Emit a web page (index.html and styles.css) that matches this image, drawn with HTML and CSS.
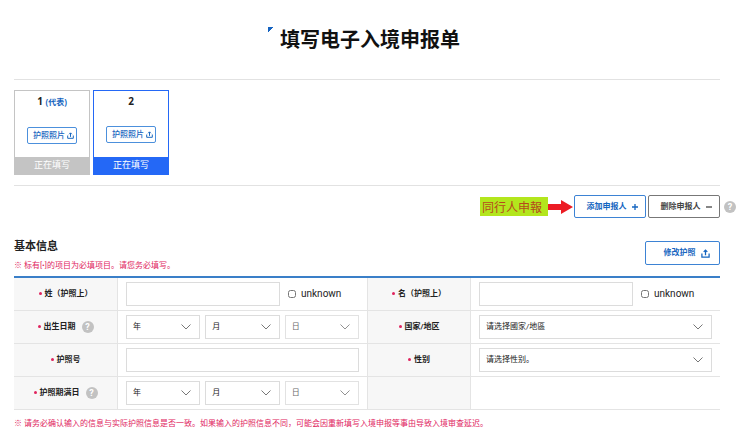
FILE: index.html
```
<!DOCTYPE html>
<html lang="zh-CN">

<head>
  <meta charset="UTF-8">
  <meta name="viewport" content="width=device-width, initial-scale=1.0">
  <title>填写电子入境申报单</title>
  <link rel="stylesheet" href="styles.css">
</head>

<body>
  <svg class="sprite" aria-hidden="true">
    <symbol id="upload" viewBox="0 0 10 10">
      <path d="M1 5v4h8V5M5 7V1.500M3 3.200l2-2 2 2" fill="none" stroke="currentColor" stroke-width="1.400" />
    </symbol>
  </svg>

  <main id="main">
    <h1 class="title">填写电子入境申报单</h1>

    <ul class="cards">
      <li class="card">
        <strong class="card-no">1 <span>(代表)</span></strong>
        <button type="button" class="photo-btn">护照照片 <svg><use href="#upload" /></svg></button>
        <span class="card-state">正在填写</span>
      </li>
      <li class="card active">
        <strong class="card-no">2</strong>
        <button type="button" class="photo-btn">护照照片 <svg><use href="#upload" /></svg></button>
        <span class="card-state">正在填写</span>
      </li>
    </ul>

    <div class="actions">
      <span class="tip">同行人申報</span>
      <svg class="arrow" viewBox="0 0 26 14">
        <path d="M0 4h13V0l12 7-12 7v-4H0z" fill="#ec1c24" />
      </svg>
      <button type="button" class="btn">添加申报人
        <svg class="sign" viewBox="0 0 6 6"><path d="M0 3h6M3 0v6" stroke="currentColor" stroke-width="1.300" /></svg>
      </button>
      <button type="button" class="btn gray">删除申报人
        <svg class="sign" viewBox="0 0 6 6"><path d="M0 3h6" stroke="currentColor" stroke-width="1.300" /></svg>
      </button>
      <button type="button" class="help">?</button>
    </div>

    <form>
      <div class="form-head">
        <div>
          <h2>基本信息</h2>
          <p class="note">※ 标有[•]的项目为必填项目。请您务必填写。</p>
        </div>
        <button type="button" class="btn edit">修改护照 <svg class="up"><use href="#upload" /></svg></button>
      </div>

      <table class="info">
        <tr>
          <th scope="row"><label class="need" for="surname">姓（护照上）</label></th>
          <td>
            <div class="fields">
              <input type="text" id="surname" class="input name">
              <label class="check"><input type="checkbox">unknown</label>
            </div>
          </td>
          <th scope="row"><label class="need" for="given">名（护照上）</label></th>
          <td>
            <div class="fields">
              <input type="text" id="given" class="input name">
              <label class="check"><input type="checkbox">unknown</label>
            </div>
          </td>
        </tr>
        <tr>
          <th scope="row"><label class="need" for="birth">出生日期</label><button type="button" class="help">?</button></th>
          <td>
            <div class="fields">
              <select id="birth" class="input"><option>年</option></select>
              <select class="input" aria-label="出生月"><option>月</option></select>
              <select class="input" aria-label="出生日" disabled><option>日</option></select>
            </div>
          </td>
          <th scope="row"><label class="need" for="nation">国家/地区</label></th>
          <td>
            <div class="fields">
              <select id="nation" class="input"><option>请选择國家/地區</option></select>
            </div>
          </td>
        </tr>
        <tr>
          <th scope="row"><label class="need" for="passport">护照号</label></th>
          <td>
            <div class="fields">
              <input type="text" id="passport" class="input">
            </div>
          </td>
          <th scope="row"><label class="need" for="gender">性别</label></th>
          <td>
            <div class="fields">
              <select id="gender" class="input"><option>请选择性别。</option></select>
            </div>
          </td>
        </tr>
        <tr>
          <th scope="row"><label class="need" for="expiry">护照期满日</label><button type="button" class="help">?</button></th>
          <td>
            <div class="fields">
              <select id="expiry" class="input"><option>年</option></select>
              <select class="input" aria-label="期满月"><option>月</option></select>
              <select class="input" aria-label="期满日" disabled><option>日</option></select>
            </div>
          </td>
          <th></th>
          <td></td>
        </tr>
      </table>
      <p class="note">※ 请务必确认输入的信息与实际护照信息是否一致。如果输入的护照信息不同，可能会因重新填写入境申报等事由导致入境审查延迟。</p>
    </form>
  </main>
</body>

</html>
```
FILE: styles.css
```
* {
  box-sizing: border-box;
}

body {
  margin: 0;
  background: #fff;
  color: #222;
  font-family: Roboto, "Noto Sans CJK SC", sans-serif;
  font-size: 8px;
  line-height: 12px;
}

button,
input,
select {
  font: inherit;
  color: inherit;
}

button {
  padding: 0;
  cursor: pointer;
}

h1,
h2,
p,
ul {
  margin: 0;
  padding: 0;
}

.sprite {
  display: block;
  width: 0;
  height: 0;
}

#main {
  padding: 25px 20px 0 14px;
}

.title {
  display: flex;
  justify-content: center;
  gap: 6px;
  height: 55px;
  padding-right: 6px;
  border-bottom: 1px solid #e2e2e2;
  color: #111;
  font-size: 20px;
  line-height: 31px;
}

.title::before {
  content: "";
  width: 6px;
  height: 6px;
  margin-top: 2px;
  background: linear-gradient(135deg, #1563c0 50%, transparent 50%);
}

.cards {
  display: flex;
  gap: 3px;
  padding: 10px 0;
  border-bottom: 1px solid #e2e2e2;
  list-style: none;
}

.card {
  display: flex;
  flex-direction: column;
  align-items: center;
  width: 76px;
  height: 85px;
  border: 1px solid #c4c4c4;
}

.card.active {
  border-color: #2468f6;
}

.card-no {
  margin-top: 4px;
  font-family: "Open Sans", "Noto Sans CJK SC", sans-serif;
  font-size: 10px;
}

.card-no span {
  color: #1565c0;
  font-size: 8px;
}

.photo-btn {
  display: flex;
  justify-content: center;
  align-items: center;
  gap: 2px;
  width: 50px;
  height: 17px;
  margin-top: 19px;
  padding-left: 3px;
  border: 1px solid #4c90dc;
  border-radius: 2px;
  background: #fff;
  color: #1565c0;
  font-weight: 500;
}

.photo-btn svg {
  width: 7px;
  height: 7px;
}

.card-state {
  width: 100%;
  margin-top: auto;
  background: #c4c4c4;
  color: #fff;
  font-size: 9px;
  line-height: 17px;
  text-align: center;
}

.card.active .card-state {
  background: #2468f6;
}

.actions {
  display: flex;
  justify-content: flex-end;
  align-items: center;
  gap: 2px;
  margin: 9px -16px 0 0;
}

.tip {
  width: 68px;
  padding-left: 2px;
  background: #b3e61d;
  color: #b5491c;
  font-family: KaiTi, "Noto Sans CJK TC", serif;
  font-size: 12px;
  line-height: 19px;
}

.arrow {
  width: 26px;
  height: 14px;
  margin: 0 -2px 0 -2px;
}

.btn {
  display: flex;
  justify-content: center;
  align-items: center;
  gap: 5px;
  width: 72px;
  height: 23px;
  padding-left: 4px;
  border: 1px solid #3d83d4;
  border-radius: 2px;
  background: #fff;
  color: #1565c0;
  font-weight: 700;
}

.btn.gray {
  border-color: #777;
  color: #444;
}

.sign {
  width: 6px;
  height: 6px;
}

.up {
  width: 9px;
  height: 9px;
}

.btn.edit {
  width: 75px;
  height: 24px;
  margin-top: 4px;
  padding-left: 8px;
}

.help {
  display: inline-block;
  width: 12px;
  height: 12px;
  border: 0;
  border-radius: 50%;
  background: #c2c2c2;
  color: #fff;
  font-size: 9px;
  font-weight: 700;
  line-height: 12px;
  text-align: center;
}

.actions .help {
  margin-left: 2px;
}

.form-head {
  display: flex;
  justify-content: space-between;
  margin-top: 19px;
  height: 39px;
}

h2 {
  margin-bottom: 3px;
  font-size: 11px;
  line-height: 20px;
}

.note {
  color: #e0245e;
}

.info {
  width: 100%;
  border-top: 2px solid #3a7fc8;
  border-collapse: separate;
  border-spacing: 0;
  table-layout: fixed;
}

.info th,
.info td {
  height: 33px;
  padding: 0;
  border-bottom: 1px solid #e4e4e4;
}

.info th {
  width: 104px;
  border-right: 1px solid #e4e4e4;
  background: #f7f7f7;
}

.info td + th {
  border-left: 1px solid #e4e4e4;
}

.need::before {
  content: "";
  display: inline-block;
  width: 3px;
  height: 3px;
  margin-right: 3px;
  border-radius: 50%;
  background: #e0245e;
  vertical-align: middle;
}

.info th .help {
  margin-left: 6px;
  vertical-align: middle;
}

.fields {
  display: flex;
  align-items: center;
  gap: 5px;
  padding: 0 8px;
}

.input {
  flex: 1;
  min-width: 0;
  height: 24px;
  padding: 0 6px;
  border: 1px solid #dcdcdc;
  border-radius: 0;
  background: #fff;
}

.input.name {
  flex: 0 1 154px;
}

select.input {
  appearance: none;
  background: #fff url("data:image/svg+xml,%3Csvg xmlns='http://www.w3.org/2000/svg' width='10' height='6'%3E%3Cpath d='M.5.5L5 5 9.500.5' fill='none' stroke='%23777'/%3E%3C/svg%3E") no-repeat right 8px center;
}

select.input:disabled {
  color: #444;
  opacity: 0.8;
}

.check {
  display: flex;
  align-items: center;
  gap: 5px;
  margin-left: 3px;
  font-size: 10px;
}

.check input {
  width: 8px;
  height: 8px;
  margin: 0;
}

.info + .note {
  margin-top: 8px;
}
```
